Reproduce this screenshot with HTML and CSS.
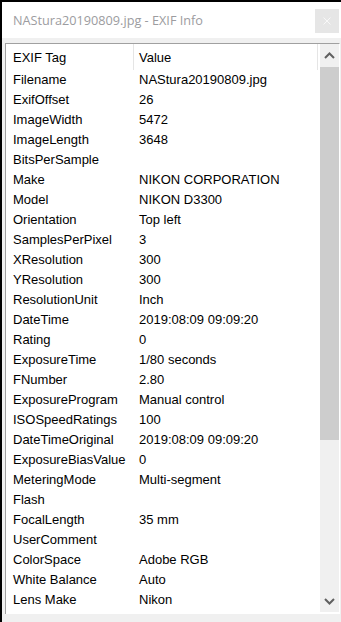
FILE: index.html
```html
<!DOCTYPE html>
<html>
<head>
<meta charset="utf-8">
<link rel="stylesheet" href="styles.css">
</head>
<body>
<div class="window">
  <div class="titlebar">
    <span class="title">NAStura20190809.jpg - EXIF Info</span>
    <div class="close">
      <svg width="10" height="10" viewBox="0 0 10 10"><path d="M1.5 1.5 L8.5 8.5 M8.5 1.5 L1.5 8.5" stroke="#f8f8f8" stroke-width="1" fill="none"/></svg>
    </div>
  </div>
  <div class="client">
    <div class="listview">
      <div class="list">
        <div class="row header"><div class="c1">EXIF Tag</div><div class="c2">Value</div></div>
        <div class="row"><div class="c1">Filename</div><div class="c2">NAStura20190809.jpg</div></div>
        <div class="row"><div class="c1">ExifOffset</div><div class="c2">26</div></div>
        <div class="row"><div class="c1">ImageWidth</div><div class="c2">5472</div></div>
        <div class="row"><div class="c1">ImageLength</div><div class="c2">3648</div></div>
        <div class="row"><div class="c1">BitsPerSample</div><div class="c2"></div></div>
        <div class="row"><div class="c1">Make</div><div class="c2">NIKON CORPORATION</div></div>
        <div class="row"><div class="c1">Model</div><div class="c2">NIKON D3300</div></div>
        <div class="row"><div class="c1">Orientation</div><div class="c2">Top left</div></div>
        <div class="row"><div class="c1">SamplesPerPixel</div><div class="c2">3</div></div>
        <div class="row"><div class="c1">XResolution</div><div class="c2">300</div></div>
        <div class="row"><div class="c1">YResolution</div><div class="c2">300</div></div>
        <div class="row"><div class="c1">ResolutionUnit</div><div class="c2">Inch</div></div>
        <div class="row"><div class="c1">DateTime</div><div class="c2">2019:08:09 09:09:20</div></div>
        <div class="row"><div class="c1">Rating</div><div class="c2">0</div></div>
        <div class="row"><div class="c1">ExposureTime</div><div class="c2">1/80 seconds</div></div>
        <div class="row"><div class="c1">FNumber</div><div class="c2">2.80</div></div>
        <div class="row"><div class="c1">ExposureProgram</div><div class="c2">Manual control</div></div>
        <div class="row"><div class="c1">ISOSpeedRatings</div><div class="c2">100</div></div>
        <div class="row"><div class="c1">DateTimeOriginal</div><div class="c2">2019:08:09 09:09:20</div></div>
        <div class="row"><div class="c1">ExposureBiasValue</div><div class="c2">0</div></div>
        <div class="row"><div class="c1">MeteringMode</div><div class="c2">Multi-segment</div></div>
        <div class="row"><div class="c1">Flash</div><div class="c2"></div></div>
        <div class="row"><div class="c1">FocalLength</div><div class="c2">35 mm</div></div>
        <div class="row"><div class="c1">UserComment</div><div class="c2"></div></div>
        <div class="row"><div class="c1">ColorSpace</div><div class="c2">Adobe RGB</div></div>
        <div class="row"><div class="c1">White Balance</div><div class="c2">Auto</div></div>
        <div class="row"><div class="c1">Lens Make</div><div class="c2">Nikon</div></div>
      </div>
      <div class="scrollbar">
        <div class="arrow up">
          <svg width="11" height="7" viewBox="0 0 11 7"><path d="M1 6 L5.5 1.5 L10 6" stroke="#606060" stroke-width="2" fill="none"/></svg>
        </div>
        <div class="thumb"></div>
        <div class="track"></div>
        <div class="arrow down">
          <svg width="11" height="7" viewBox="0 0 11 7"><path d="M1 1 L5.5 5.5 L10 1" stroke="#606060" stroke-width="2" fill="none"/></svg>
        </div>
      </div>
    </div>
  </div>
</div>
</body>
</html>
```
FILE: styles.css
```css
html, body {
  margin: 0;
  padding: 0;
  width: 341px;
  height: 622px;
  overflow: hidden;
  background: #000000;
}

.window {
  margin: 2px 0 0 2px;
  width: 339px;
  height: 620px;
  background: #f0f0f0;
  display: flex;
  flex-direction: column;
}

.titlebar {
  height: 36px;
  background: #ffffff;
  display: flex;
  align-items: center;
  padding-left: 11px;
  flex: none;
}

.title {
  font-family: "Open Sans", "Noto Sans", sans-serif;
  font-size: 12.7px;
  color: #9c9ca0;
  white-space: nowrap;
}

.close {
  margin-left: auto;
  margin-right: 2px;
  align-self: flex-start;
  margin-top: 7px;
  width: 24px;
  height: 24px;
  background: #e6e6e6;
  display: flex;
  align-items: center;
  justify-content: center;
}

.client {
  padding: 5px 1px 0 3px;
  flex: none;
}

.listview {
  display: flex;
  background: #ffffff;
  border-left: 1px solid #a0a0a0;
  border-top: 1px solid #a0a0a0;
  border-right: 1px solid #ffffff;
  padding-bottom: 2px;
  height: 568px;
}

.list {
  width: 314px;
  flex: none;
  font-family: "Liberation Sans", Arial, sans-serif;
  font-size: 13px;
  color: #000000;
}

.row {
  display: flex;
  height: 20px;
  line-height: 20px;
  white-space: nowrap;
}

.row .c1 {
  width: 121px;
  padding-left: 7px;
  flex: none;
}

.row .c2 {
  padding-left: 5px;
  flex: none;
}

.row.header {
  height: 26px;
  line-height: 24px;
}

.row.header .c1 {
  width: 120px;
  padding-top: 2px;
  border-right: 1px solid #e5e5e5;
}

.row.header .c2 {
  width: 178px;
  padding-top: 2px;
  border-right: 1px solid #e5e5e5;
}

.scrollbar {
  width: 19px;
  flex: none;
  display: flex;
  flex-direction: column;
  background: #f0f0f0;
}

.arrow {
  display: flex;
  align-items: center;
  justify-content: center;
  flex: none;
}

.arrow.up {
  height: 23px;
}

.arrow.down {
  height: 22px;
}

.thumb {
  height: 373px;
  background: #cdcdcd;
  flex: none;
}

.track {
  flex: 1;
}
```
